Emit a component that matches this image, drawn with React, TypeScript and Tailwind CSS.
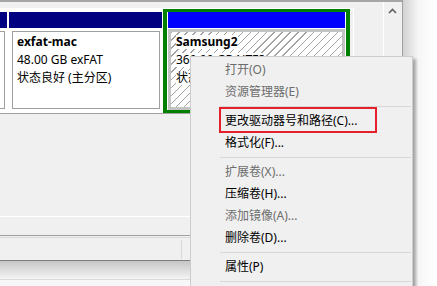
import React from "react";

const menuItems: { label: string; disabled?: boolean; sep?: boolean }[] = [
  { label: "打开(O)", disabled: true },
  { label: "资源管理器(E)", disabled: true },
  { label: "", sep: true },
  { label: "更改驱动器号和路径(C)..." },
  { label: "格式化(F)..." },
  { label: "", sep: true },
  { label: "扩展卷(X)...", disabled: true },
  { label: "压缩卷(H)..." },
  { label: "添加镜像(A)...", disabled: true },
  { label: "删除卷(D)..." },
  { label: "", sep: true },
  { label: "属性(P)" },
  { label: "", sep: true },
];

const Line: React.FC<{ bold?: boolean; children: React.ReactNode }> = ({ bold, children }) => (
  <div className="h-[18px] flex items-center">
    <span className={`bg-white leading-[14px] whitespace-nowrap ${bold ? "font-bold" : ""}`}>{children}</span>
  </div>
);

const App: React.FC = () => {
  return (
    <div className="relative w-[437px] h-[286px] overflow-hidden bg-white flex text-[12px] leading-[18px] text-black font-['Noto_Sans','Noto_Sans_CJK_SC',sans-serif]">
      {/* Disk Management window */}
      <div className="w-[403px] h-full shrink-0 flex flex-col border-r border-[#a0a0a0] bg-[#f0f0f0]">
        <div className="h-[2px] bg-[#a6a6a6]" />

        <div className="h-[233px] flex">
          {/* Graphical disk view */}
          <div className="w-[383px] pt-[6px]">
            <div className="w-[354px] h-[209px] border-t border-r border-b border-white">
              <div className="w-[350px] h-[105px] bg-white border-b border-[#a0a0a0] pt-[2px] flex items-start">
                {/* Cut-off partition */}
                <div className="w-[7px] mt-[1px] flex flex-col">
                  <div className="h-[16px] bg-[#000080]" />
                  <div className="w-[5px] h-[78px] mt-[3px] border-r border-b border-t border-[#a0a0a0]" />
                </div>
                {/* exfat-mac */}
                <div className="w-[153px] ml-[2px] mr-[1px] mt-[1px] flex flex-col">
                  <div className="h-[16px] bg-[#000080]" />
                  <div className="ml-[3px] mt-[3px] w-[148px] h-[78px] border border-[#a0a0a0] pt-[1px] pl-[4px]">
                    <Line bold>exfat-mac</Line>
                    <Line>48.00 GB exFAT</Line>
                    <Line>状态良好 (主分区)</Line>
                  </div>
                </div>
                {/* Samsung2 (selected) */}
                <div className="w-[187px] h-[104px] -mt-[2px] border-x-4 border-y-[3px] border-[#008000] bg-white px-[1px] flex flex-col">
                  <div className="h-[16px] bg-[#0000ff]" />
                  <div className="mt-[1px] flex-1 border-[3px] border-[#c3c3c3] pt-[1px] pl-[5px] bg-[repeating-linear-gradient(135deg,#a3a3a3_0px,#a3a3a3_1px,#ffffff_1px,#ffffff_5.6px)]">
                    <Line bold>Samsung2</Line>
                    <Line>360.00 GB NTFS</Line>
                    <Line>状态良好 (主分区)</Line>
                  </div>
                </div>
              </div>
            </div>
          </div>

          {/* Scrollbar */}
          <div className="w-[19px] border-l border-white pt-[6px] pl-[4px]">
            <svg width="9" height="6" viewBox="0 0 9 6">
              <polyline points="1,5 4.5,1.5 8,5" fill="none" stroke="#606060" strokeWidth="1.6" />
            </svg>
          </div>
        </div>

        {/* Status bar */}
        <div className="h-[25px] border-t border-[#a0a0a0] pt-[1px]">
          <div className="h-full border-t border-[#dadada] flex">
            <div className="w-[181px]" />
            <div className="w-px h-[19px] mt-[2px] bg-[#d8d8d8]" />
          </div>
        </div>

        {/* Window bottom edge */}
        <div className="h-[26px] border-t border-[#7d7d7d] flex flex-col">
          <div className="h-[18px] bg-[linear-gradient(to_bottom,#c6c6c6,#f4f4f4)]" />
          <div className="h-px bg-[#dcdcdc]" />
          <div className="flex-1 bg-[#f7f7f7]" />
        </div>
      </div>

      {/* Window shadow */}
      <div className="flex-1 bg-[linear-gradient(to_right,#d2d2d2,#f6f6f6_45%,#ffffff)]" />

      {/* Context menu */}
      <div className="absolute left-[190px] top-[56px] w-[223px] h-[240px] border border-[#cccccc] bg-[#f0f0f0] pt-[2px] shadow-[3px_3px_3px_rgba(0,0,0,0.3)]">
        {menuItems.map((item, i) =>
          item.sep ? (
            <div key={i} className="h-[7px] ml-[29px] mr-[1px] flex items-center">
              <div className="w-full h-px bg-[#d7d7d7]" />
            </div>
          ) : (
            <div
              key={i}
              className={`h-[22px] pl-[34px] flex items-center whitespace-nowrap ${item.disabled ? "text-[#6d6d6d]" : "text-black"}`}
            >
              {item.label}
            </div>
          )
        )}
      </div>

      {/* Highlight annotation */}
      <div className="absolute left-[219px] top-[107px] w-[158px] h-[26px] border-2 border-[#e3202b]" />
    </div>
  );
};

export default App;
